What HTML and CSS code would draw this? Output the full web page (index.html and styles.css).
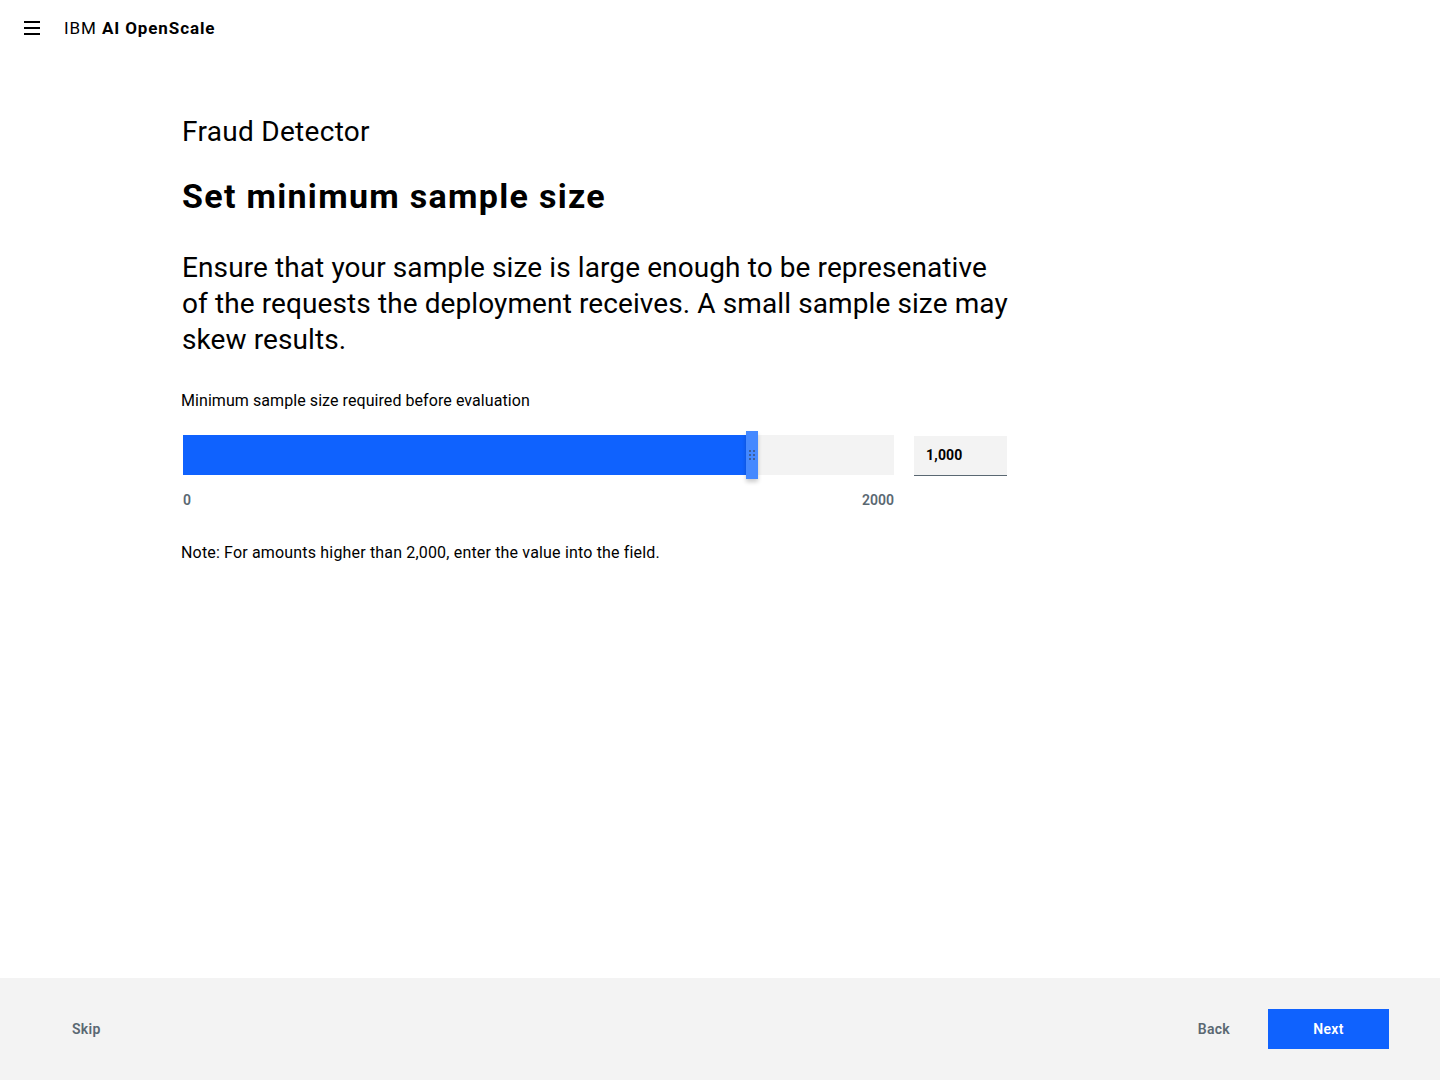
FILE: index.html
```html
<!DOCTYPE html>
<html lang="en">
<head>
<meta charset="utf-8">
<title>IBM AI OpenScale</title>
<link rel="stylesheet" href="styles.css">
</head>
<body>
<div class="page">
  <header class="header">
    <button class="menu-btn" aria-label="Menu">
      <svg width="16" height="14" viewBox="0 0 16 14"><rect x="0" y="0" width="16" height="2" fill="#000"/><rect x="0" y="6" width="16" height="2" fill="#000"/><rect x="0" y="12" width="16" height="2" fill="#000"/></svg>
    </button>
    <div class="brand">IBM <strong>AI OpenScale</strong></div>
  </header>
  <main class="main">
    <div class="content">
      <h2 class="subtitle">Fraud Detector</h2>
      <h1 class="title">Set minimum sample size</h1>
      <p class="lead">Ensure that your sample size is large enough to be represenative of the requests the deployment receives. A small sample size may skew results.</p>
      <div class="field-label">Minimum sample size required before evaluation</div>
      <div class="slider-row">
        <div class="slider">
          <div class="track">
            <div class="fill" style="width:563px"></div>
            <div class="thumb" style="left:563px"><span class="grip"><i></i><i></i><i></i><i></i><i></i><i></i></span></div>
          </div>
          <div class="range-labels"><span>0</span><span>2000</span></div>
        </div>
        <div class="num-input">1,000</div>
      </div>
      <p class="note">Note: For amounts higher than 2,000, enter the value into the field.</p>
    </div>
  </main>
  <footer class="footer">
    <button class="ghost skip">Skip</button>
    <div class="footer-right">
      <button class="ghost">Back</button>
      <button class="primary">Next</button>
    </div>
  </footer>
</div>
</body>
</html>
```
FILE: styles.css
```css
* { box-sizing: border-box; }
html, body { margin: 0; padding: 0; }
body {
  font-family: Roboto, "Noto Sans", "Liberation Sans", sans-serif;
  color: #000;
  background: #fff;
}
.page {
  height: 1080px;
  display: flex;
  flex-direction: column;
}
.header {
  height: 56px;
  display: flex;
  align-items: center;
  padding-left: 24px;
}
.menu-btn {
  border: 0;
  background: none;
  padding: 0;
  width: 16px;
  height: 14px;
  display: flex;
  margin-right: 24px;
}
.brand {
  font-size: 17px;
  letter-spacing: 0.9px;
}
.brand strong { font-weight: 700; }
.main {
  flex: 1;
}
.content {
  padding-left: 182px;
  width: 1012px;
}
.subtitle {
  margin: 58px 0 0;
  font-size: 28px;
  font-weight: 400;
  line-height: 36px;
  letter-spacing: 0.3px;
}
.title {
  margin: 26px 0 0;
  font-size: 34px;
  font-weight: 700;
  line-height: 40px;
  letter-spacing: 1.3px;
}
.lead {
  margin: 34px 0 0;
  font-size: 28px;
  line-height: 36px;
  font-weight: 400;
  letter-spacing: 0.1px;
  max-width: 830px;
}
.field-label {
  margin-top: 33px;
  font-size: 16px;
  line-height: 20px;
  margin-left: -1px;
  letter-spacing: 0.07px;
}
.slider-row {
  display: flex;
  gap: 20px;
  margin-top: 24px;
  margin-left: 1px;
}
.slider { width: 711px; }
.track {
  position: relative;
  height: 40px;
  background: #f3f3f3;
}
.fill {
  height: 40px;
  background: #0f62fe;
}
.thumb {
  position: absolute;
  top: -4px;
  width: 12px;
  height: 48px;
  background: #4589ff;
  box-shadow: 0 3px 4px rgba(0,0,0,0.2);
  display: flex;
  align-items: center;
  justify-content: center;
}
.grip {
  display: grid;
  grid-template-columns: 2px 2px;
  gap: 2px;
}
.grip i {
  display: block;
  width: 2px;
  height: 2px;
  background: #3d5f9c;
}
.range-labels {
  display: flex;
  justify-content: space-between;
  margin-top: 16px;
  font-size: 14px;
  font-weight: 600;
  color: #5a6872;
  line-height: 18px;
}
.num-input {
  width: 93px;
  height: 40px;
  margin-top: 1px;
  background: #f3f3f3;
  border-bottom: 1px solid #5a6872;
  font-size: 14px;
  font-weight: 700;
  padding: 0 12px 1px;
  display: flex;
  align-items: center;
  letter-spacing: 0.2px;
}
.note {
  margin: 34px 0 0 -1px;
  font-size: 16px;
  line-height: 20px;
  letter-spacing: 0.17px;
}
.footer {
  height: 102px;
  background: #f3f3f3;
  display: flex;
  align-items: center;
  justify-content: space-between;
  padding: 0 51px 0 72px;
}
.footer-right {
  display: flex;
  align-items: center;
  gap: 38px;
}
button {
  font-family: inherit;
  cursor: pointer;
}
.ghost {
  border: 0;
  background: none;
  padding: 0;
  font-size: 14px;
  font-weight: 600;
  color: #5a6872;
  letter-spacing: 0.3px;
}
.primary {
  border: 0;
  width: 121px;
  height: 40px;
  background: #0f62fe;
  color: #fff;
  font-size: 14px;
  font-weight: 600;
  letter-spacing: 0.3px;
}
```
